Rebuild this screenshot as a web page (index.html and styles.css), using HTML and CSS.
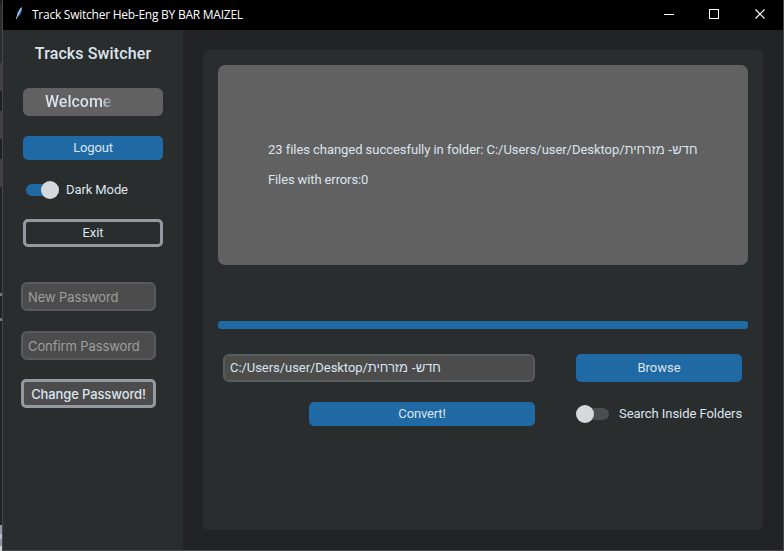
FILE: index.html
```html
<!DOCTYPE html>
<html lang="en">
<head>
<meta charset="utf-8">
<title>Track Switcher Heb-Eng BY BAR MAIZEL</title>
<link rel="stylesheet" href="styles.css">
</head>
<body>
<div class="backdrop"></div>
<div class="window">
  <header class="titlebar">
    <svg class="feather" width="10" height="14" viewBox="0 0 10 14"><path d="M1.6 12.5 2.2 7 4.4 3 7 1 6.8 5 5 9 2.8 10.5Z" fill="#3f7fc4"/><path d="M1.3 12.8 3 8.5 6.5 1.6" fill="none" stroke="#c5dcf2" stroke-width=".9"/></svg>
    <span class="caption">Track Switcher Heb-Eng BY BAR MAIZEL</span>
    <svg class="controls" width="104" height="12" viewBox="0 0 104 12" fill="none" stroke="#fff" shape-rendering="crispEdges"><path d="M0 5.5h10M45.5.5h9v9h-9z"/><path d="M91.5.5l9 9m0-9l-9 9" stroke-width="1.2" shape-rendering="auto"/></svg>
  </header>
  <div class="content">
    <aside class="sidebar">
      <h1 class="heading">Tracks Switcher</h1>
      <div class="welcome"><span class="greeting">Welcome</span></div>
      <button class="btn logout">Logout</button>
      <label class="switch on"><span class="track"><span class="knob"></span></span><span>Dark Mode</span></label>
      <button class="btn exit">Exit</button>
      <div class="field password">New Password</div>
      <div class="field password">Confirm Password</div>
      <button class="btn change">Change Password!</button>
    </aside>
    <main class="panel">
      <div class="log">
        <p>23 files changed succesfully in folder: C:/Users/user/Desktop/<span class="hebrew">חדש- מזרחית</span></p>
        <p class="errors">Files with errors:0</p>
      </div>
      <div class="progress"></div>
      <div class="controls-grid">
        <div class="field path">C:/Users/user/Desktop/<span class="hebrew">חדש- מזרחית</span></div>
        <button class="btn browse">Browse</button>
        <button class="btn convert">Convert!</button>
        <label class="switch search"><span class="track"><span class="knob"></span></span><span>Search Inside Folders</span></label>
      </div>
    </main>
  </div>
</div>
</body>
</html>
```
FILE: styles.css
```css
* { box-sizing: border-box; }
body {
  margin: 0;
  width: 784px;
  height: 551px;
  display: flex;
  overflow: hidden;
  background: #222325;
  color: #dce4ee;
  font: 13px/16px Roboto, "Liberation Sans", sans-serif;
}
.backdrop {
  width: 2px;
  background: linear-gradient(#222 0 5px, #2a2d2e 5px 63px, #404040 63px 91px, #202122 91px 111px, #404040 111px 139px, #202122 139px 159px, #404040 159px 187px, #222325 187px 293px, #777 293px 296px, #222325 296px 318px, #777 318px 321px, #222325 321px 525px, #8d98a8 525px 534px, #b9b9b9 534px 539px, #8795ad 539px 546px, #ccc 546px);
}
.window {
  width: 782px;
  height: 551px;
  display: flex;
  flex-direction: column;
  border: solid #474748;
  border-width: 0 1px 1px;
  background: #222325;
}
.titlebar {
  height: 30px;
  flex: none;
  display: flex;
  align-items: center;
  background: #000;
  color: #fff;
}
.feather { margin: 0 7px 4px 12px; }
.caption {
  font: 12px/16px "Open Sans", "Noto Sans", sans-serif;
  letter-spacing: -.25px;
  white-space: nowrap;
}
.controls { margin-left: auto; margin-right: 15px; }
.content { display: flex; flex: 1; }
.sidebar {
  width: 180px;
  display: flex;
  flex-direction: column;
  align-items: flex-start;
  padding-left: 20px;
  background: #2a2d2e;
}
.heading {
  margin: 14px 0 0;
  width: 140px;
  text-align: center;
  font-size: 16px;
  line-height: 20px;
  font-weight: 500;
  letter-spacing: .12px;
  white-space: nowrap;
}
.welcome {
  width: 140px;
  height: 28px;
  margin-top: 24px;
  padding-left: 22px;
  border-radius: 6px;
  background: #616161;
  font-size: 16px;
  line-height: 27px;
  font-weight: 500;
}
.greeting {
  background: linear-gradient(90deg, #dce4ee 86%, #808387);
  background-clip: text;
  color: transparent;
}
.btn {
  display: block;
  padding: 0;
  border: 0;
  border-radius: 5px;
  background: #1f6aa5;
  color: inherit;
  font: inherit;
  text-align: center;
}
.logout { width: 140px; height: 24px; margin-top: 20px; letter-spacing: -.15px; }
.switch { display: flex; align-items: center; height: 18px; gap: 7px; white-space: nowrap; letter-spacing: -.1px; }
.track { display: flex; align-items: center; flex: none; width: 33px; height: 12px; border-radius: 6px; background: #4a4d50; }
.knob { width: 18px; height: 18px; flex: none; border-radius: 50%; background: #d5d9de; }
.on { margin: 21px 0 0 3px; }
.on .track { justify-content: flex-end; background: #1f6aa5; }
.exit { width: 140px; height: 28px; margin-top: 20px; border: 3px solid #949a9f; background: transparent; letter-spacing: -.1px; }
.field { border: 2px solid #565b5e; border-radius: 6px; background: #4c4c4c; white-space: nowrap; }
.password {
  width: 135px;
  height: 29px;
  margin: 35px 0 0 -2px;
  padding-left: 5px;
  color: #9e9e9e;
  font: 13px/26px Inter, sans-serif;
  letter-spacing: -.1px;
}
.password + .password { margin-top: 20px; }
.change {
  width: 135px;
  height: 29px;
  margin: 19px 0 0 -2px;
  padding-top: 2px;
  border: 3px solid #949a9f;
  background: #4c4c4c;
  font: 500 13px/21px Inter, sans-serif;
  letter-spacing: -.12px;
}
.panel { width: 560px; height: 480px; margin: 20px 0 0 20px; padding: 15px; border-radius: 6px; background: #2a2d2e; }
.log { height: 200px; padding: 77px 0 0 50px; border-radius: 7px; background: #616161; white-space: nowrap; letter-spacing: -.05px; }
.log p { margin: 0 0 14px; }
.log .errors { letter-spacing: -.12px; }
.hebrew { font-family: "Liberation Sans", sans-serif; }
.progress { height: 8px; margin-top: 56px; border-radius: 3px; background: #1f6aa5; }
.controls-grid {
  display: grid;
  grid-template-columns: 312px 166px;
  grid-template-rows: 28px 24px;
  gap: 20px 41px;
  margin: 25px 0 0 5px;
}
.path { padding-left: 5px; line-height: 24px; letter-spacing: -.05px; }
.convert { width: 226px; justify-self: end; letter-spacing: -.15px; }
.search { height: 24px; gap: 10px; letter-spacing: -.05px; }
```
